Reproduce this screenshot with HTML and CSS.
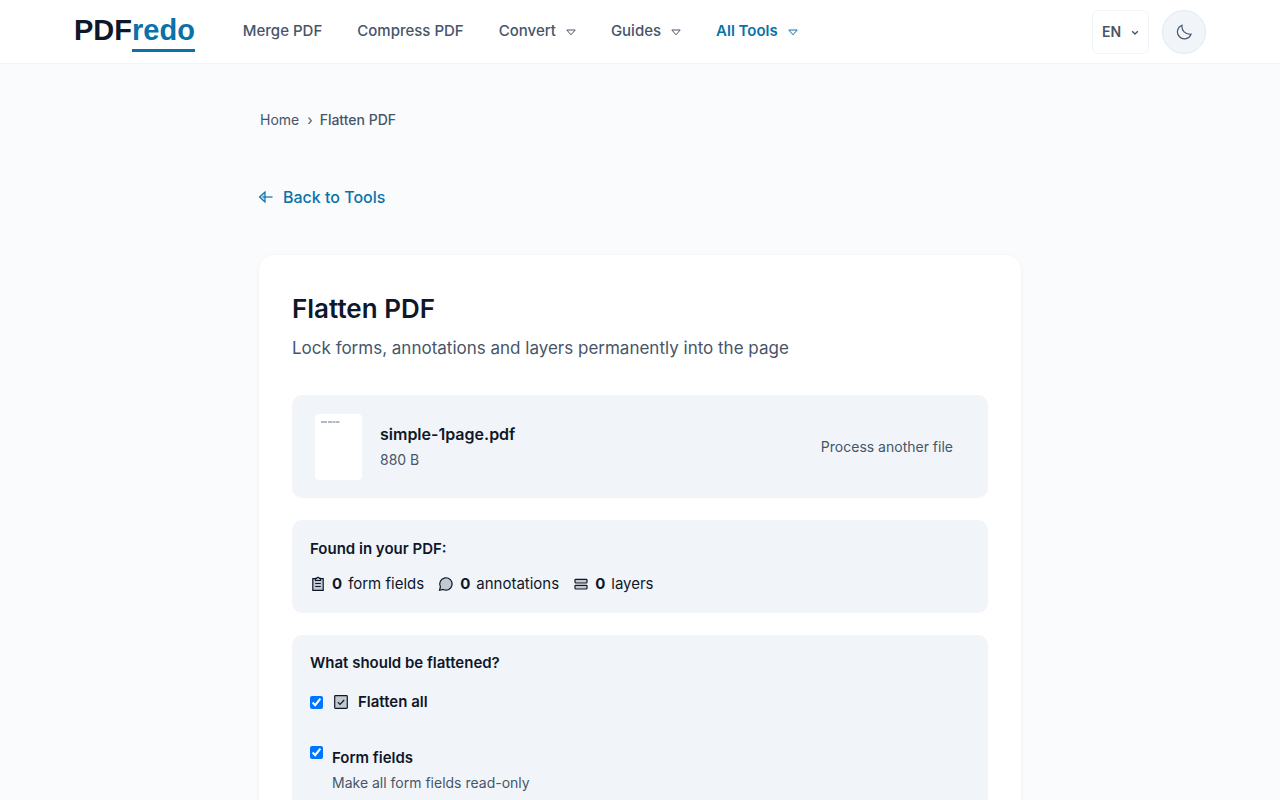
FILE: index.html
```html
<!DOCTYPE html>
<html lang="en">
<head>
<meta charset="utf-8">
<meta name="viewport" content="width=device-width, initial-scale=1">
<title>Flatten PDF – PDFredo</title>
<link rel="stylesheet" href="styles.css">
</head>
<body>
<header class="site-header">
  <div class="header-inner">
    <a class="logo" href="#">PDF<span class="logo-accent">redo</span></a>
    <nav class="nav" aria-label="Main">
      <a class="nav-link" href="#">Merge PDF</a>
      <a class="nav-link" href="#">Compress PDF</a>
      <button class="nav-link" type="button">Convert
        <svg class="caret" viewBox="0 0 10 7" aria-hidden="true"><path d="M.8 1h8.400L5 5.800z"/></svg>
      </button>
      <button class="nav-link" type="button">Guides
        <svg class="caret" viewBox="0 0 10 7" aria-hidden="true"><path d="M.8 1h8.400L5 5.800z"/></svg>
      </button>
      <button class="nav-link nav-active" type="button">All Tools
        <svg class="caret" viewBox="0 0 10 7" aria-hidden="true"><path d="M.8 1h8.400L5 5.800z"/></svg>
      </button>
    </nav>
    <div class="header-tools">
      <button class="lang" type="button">EN
        <svg class="lang-caret" viewBox="0 0 8 6" aria-hidden="true"><path d="M1.200 1.200 4 4l2.800-2.800"/></svg>
      </button>
      <button class="theme" type="button" aria-label="Dark mode">
        <svg class="moon" viewBox="0 0 16 16" aria-hidden="true"><path d="M6 1.200C5.300 6.600 9.300 10.800 15 10.200A7 7 0 1 1 6 1.200z"/></svg>
      </button>
    </div>
  </div>
</header>
<main class="page">
  <nav class="crumbs" aria-label="Breadcrumb">
    <a class="crumb" href="#">Home</a>
    <span class="crumb-sep">›</span>
    <span class="crumb-current">Flatten PDF</span>
  </nav>
  <a class="back" href="#">
    <svg class="back-icon" viewBox="0 0 15 12" aria-hidden="true"><path class="tint" d="M7 1v10L1.500 6z"/><path d="M4.500 6H14.500"/></svg>
    Back to Tools
  </a>
  <section class="card">
    <h1 class="title">Flatten PDF</h1>
    <p class="lead">Lock forms, annotations and layers permanently into the page</p>

    <div class="panel file">
      <div class="thumb"><svg class="thumb-text" viewBox="0 0 20 2" aria-hidden="true"><path d="M0 1h6M7 1h4M11.500 1h3M15 1h3.500"/></svg></div>
      <div class="file-info">
        <div class="file-name">simple-1page.pdf</div>
        <div class="file-size">880 B</div>
      </div>
      <button class="another" type="button">Process another file</button>
    </div>

    <div class="panel">
      <h2 class="panel-title">Found in your PDF:</h2>
      <ul class="stats">
        <li class="stat">
          <svg class="icon" viewBox="0 0 16 16" aria-hidden="true"><path class="tint" d="M2.800 2.600h10.400v11.800H2.800z"/><path class="paper" d="M5.500 4.400V2.300h1.200a1.400 1.400 0 0 1 2.600 0h1.200v2.100z"/><path d="M5.200 7.500h5.600M5.200 10.500h5.600"/></svg>
          <strong>0</strong> form fields
        </li>
        <li class="stat">
          <svg class="icon" viewBox="0 0 16 16" aria-hidden="true"><path class="tint" d="M1.500 14.300 2.400 10.700A6.200 6.200 0 1 1 5.200 13.500z"/></svg>
          <strong>0</strong> annotations
        </li>
        <li class="stat">
          <svg class="icon" viewBox="0 0 16 16" aria-hidden="true"><rect class="tint" x="2" y="3.300" width="12" height="3.700" rx=".8"/><rect class="tint" x="2" y="9.300" width="12" height="3.700" rx=".8"/></svg>
          <strong>0</strong> layers
        </li>
      </ul>
    </div>

    <fieldset class="panel options">
      <legend class="panel-title">What should be flattened?</legend>
      <div class="choice choice-all">
        <input class="tick" type="checkbox" id="all" checked>
        <label class="choice-name" for="all">
          <svg class="icon" viewBox="0 0 16 16" aria-hidden="true"><rect class="tint" x="1.700" y="1.700" width="12.600" height="12.600" rx=".8"/><path d="M4.800 8.200 7 10.400 11.200 6"/></svg>
          Flatten all
        </label>
      </div>
      <div class="choice">
        <input class="tick" type="checkbox" id="fields" checked aria-describedby="fields-note">
        <div>
          <label class="choice-name" for="fields">Form fields</label>
          <p class="choice-note" id="fields-note">Make all form fields read-only</p>
        </div>
      </div>
    </fieldset>
  </section>
</main>
</body>
</html>
```
FILE: styles.css
```css
* { box-sizing: border-box; }

body {
  margin: 0;
  background: #fafbfd;
  color: #0f172a;
  font: 400 15px/24px Inter, "Liberation Sans", sans-serif;
}

a { color: inherit; text-decoration: none; }
h1, h2, p, ul { margin: 0; padding: 0; }
button { font: inherit; color: inherit; background: none; border: 0; padding: 0; cursor: pointer; }
svg { fill: none; stroke: currentColor; flex: none; }

.site-header { background: #fff; border-bottom: 1px solid #f1f5f9; }
.header-inner {
  display: flex;
  align-items: center;
  max-width: 1132px;
  min-height: 63px;
  margin: 0 auto;
}
.logo { font: 700 29px/38px "Liberation Sans", Arial, sans-serif; }
.logo-accent { display: inline-block; color: #0a72a8; border-bottom: 3px solid #0a72a8; }
.nav { display: flex; gap: 35px; margin-left: 48px; padding-bottom: 2px; color: #475569; font-weight: 500; }
.nav-link { display: flex; align-items: center; gap: 10px; }
.nav-active { color: #0a72a8; font-weight: 600; }
.caret { width: 10px; height: 7px; margin-top: 3px; }
.header-tools { display: flex; align-items: center; gap: 13px; margin-left: auto; color: #475569; }
.lang {
  display: flex;
  align-items: center;
  justify-content: space-between;
  width: 57px;
  height: 44px;
  padding: 0 9px;
  border: 1px solid #f1f5f9;
  border-radius: 6px;
  font-size: 14px;
  font-weight: 600;
}
.lang-caret { width: 8px; height: 6px; stroke-width: 1.4; margin-top: 2px; }
.theme {
  display: grid;
  place-items: center;
  width: 44px;
  height: 44px;
  border: 1px solid #e2e8f0;
  border-radius: 50%;
  background: #f1f5f9;
}
.moon { width: 16px; height: 16px; stroke-width: 1.2; }

.page { max-width: 764px; margin: 0 auto; padding: 44px 0; }
.crumbs { display: flex; gap: 7px; padding: 0 2px; color: #475569; font-size: 14px; }
.crumb-sep { padding-left: 1px; }
.crumb-current { font-weight: 500; }
.back { display: flex; align-items: center; gap: 10px; width: max-content; margin-top: 53px; color: #0a72a8; font-size: 16px; font-weight: 500; }
.back-icon { width: 15px; height: 12px; stroke-width: 1.2; }
.tint { fill: currentColor; fill-opacity: 0.2; }
.paper { fill: #f1f5f9; }

.card {
  margin-top: 45px;
  padding: 34px 33px;
  background: #fff;
  border: 1px solid #f5f8fb;
  border-radius: 16px;
  box-shadow: 0 1px 4px #0f172a08;
}
.title { font-size: 26px; line-height: 40px; font-weight: 600; }
.lead { margin-top: 5px; color: #475569; font-size: 17px; line-height: 28px; }

.panel { margin: 22px 0 0; padding: 17px 18px; border: 0; border-radius: 10px; background: #f1f5f9; }
.panel-title { font-size: 15px; line-height: 24px; font-weight: 600; }
.file { display: flex; align-items: center; gap: 18px; margin-top: 33px; padding: 19px 35px 18px 23px; }
.thumb { width: 47px; height: 66px; padding: 7px 6px; background: #fff; border-radius: 4px; }
.thumb-text { display: block; width: 20px; height: 2px; color: #64748b; }
.file-name { font-size: 16px; line-height: 26px; font-weight: 600; }
.file-size { color: #475569; font-size: 14px; line-height: 26px; }
.another { margin-left: auto; color: #475569; font-size: 14px; }

.stats { display: flex; flex-wrap: wrap; gap: 14px; margin-top: 11px; list-style: none; }
.stat { display: flex; align-items: center; gap: 6px; }
.icon { width: 16px; height: 16px; stroke-width: 1.2; }

.options { min-width: 0; padding-top: 16px; }
.options .panel-title { float: left; width: 100%; padding: 0; }
.choice { clear: both; display: flex; align-items: flex-start; gap: 9px; padding-top: 32px; }
.choice-all { align-items: center; gap: 10px; padding-top: 15px; }
.tick { flex: none; width: 13px; height: 13px; margin: 0; accent-color: #0075ff; }
.choice-name { display: flex; align-items: center; gap: 9px; font-size: 15px; font-weight: 600; }
.choice-note { color: #475569; font-size: 14px; line-height: 26px; }
```
